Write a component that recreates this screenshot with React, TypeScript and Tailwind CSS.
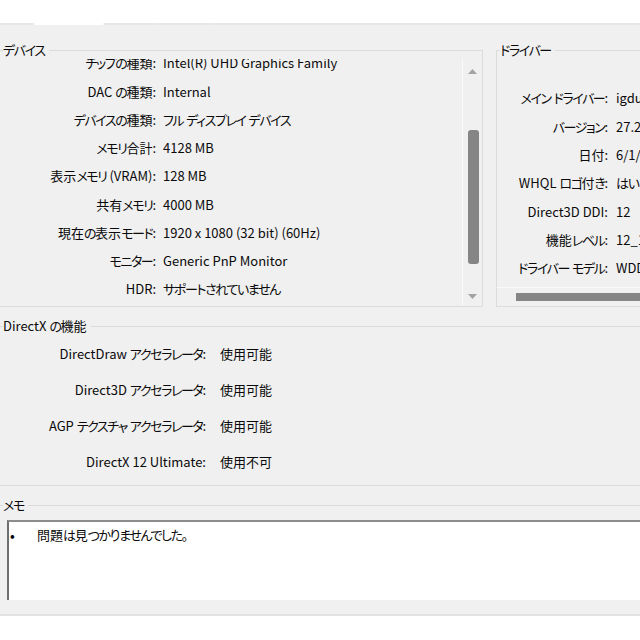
import React from "react";

const font = {
  fontFamily: '"Noto Sans CJK JP", "Noto Sans", sans-serif',
};

// Narrow kana runs so they approximate the proportional kana of the Windows UI font.
function T({ s }: { s: string }) {
  const parts = s.split(/([\u3000-\u30FF]+)/).filter((p) => p.length > 0);
  return (
    <>
      {parts.map((p, i) =>
        /^[\u3000-\u30FF]+$/.test(p) ? (
          <span key={i} className="tracking-[-1.4px]">
            {p}
          </span>
        ) : (
          <span key={i}>{p}</span>
        )
      )}
    </>
  );
}

function GroupLabel({ text }: { text: string }) {
  return (
    <div className="absolute left-[3px] top-[-10px] bg-[#f0f0f0] pr-[4px] text-[13px] leading-[18px] text-[#0a0a0a] whitespace-nowrap">
      <T s={text} />
    </div>
  );
}

const deviceRows: [string, string][] = [
  ["チップの種類:", "Intel(R) UHD Graphics Family"],
  ["DAC の種類:", "Internal"],
  ["デバイスの種類:", "フル ディスプレイ デバイス"],
  ["メモリ合計:", "4128 MB"],
  ["表示メモリ (VRAM):", "128 MB"],
  ["共有メモリ:", "4000 MB"],
  ["現在の表示モード:", "1920 x 1080 (32 bit) (60Hz)"],
  ["モニター:", "Generic PnP Monitor"],
  ["HDR:", "サポートされていません"],
];

const driverRows: [string, string][] = [
  ["メイン ドライバー:", "igdumdim64.dll,igd10iumd64.dll,igd10iumd64.dll"],
  ["バージョン:", "27.20.100.8681"],
  ["日付:", "6/1/2021 9:00:00"],
  ["WHQL ロゴ付き:", "はい"],
  ["Direct3D DDI:", "12"],
  ["機能レベル:", "12_1,12_0,11_1,11_0,10_1,10_0"],
  ["ドライバー モデル:", "WDDM 2.7"],
];

const dxRows: [string, string][] = [
  ["DirectDraw アクセラレータ:", "使用可能"],
  ["Direct3D アクセラレータ:", "使用可能"],
  ["AGP テクスチャ アクセラレータ:", "使用可能"],
  ["DirectX 12 Ultimate:", "使用不可"],
];

export default function App() {
  return (
    <div
      className="w-[640px] h-[640px] bg-white overflow-hidden flex flex-col text-[13px] text-[#0a0a0a] [font-feature-settings:'palt']"
      style={font}
    >
      <div className="h-[23px] bg-white shrink-0" />
      {/* tab strip */}
      <div className="h-[2px] shrink-0 flex">
        <div className="w-[34px] bg-[#e6e6e6]" />
        <div className="w-[69px] bg-white" />
        <div className="w-[54px] bg-[#e6e6e6] border-l border-[#f4f4f4]" />
        <div className="w-[53px] bg-[#e6e6e6] border-l border-[#f4f4f4]" />
        <div className="flex-1 bg-[#e6e6e6] border-l border-[#f4f4f4]" />
      </div>

      <div className="h-[591px] shrink-0 bg-[#f0f0f0] border-b-2 border-[#e2e2e2] flex flex-col">
        <div className="h-[25px] shrink-0" />
        {/* top groups */}
        <div className="flex h-[257px] shrink-0">
          <div className="relative w-[483px] shrink-0 border-t border-r border-b border-[#dcdcdc] flex flex-col">
            <GroupLabel text="デバイス" />
            <div className="h-[8px] shrink-0" />
            <div className="flex flex-1 min-h-0">
              <div className="flex-1 overflow-hidden">
                <div className="mt-[-10px]">
                  {deviceRows.map(([l, v]) => (
                    <div key={l} className="flex items-center h-[28.25px]">
                      <div className="w-[156px] shrink-0 text-right whitespace-nowrap">
                        <T s={l} />
                      </div>
                      <div className="pl-[7px] whitespace-nowrap">
                        <T s={v} />
                      </div>
                    </div>
                  ))}
                </div>
              </div>
              {/* vertical scrollbar */}
              <div className="w-[20px] shrink-0 border-l border-[#fafafa] flex flex-col items-center pt-[10px]">
                <svg width="9" height="5" viewBox="0 0 9 5" className="shrink-0">
                  <path d="M0 5 L4.5 0 L9 5 Z" fill="#a3a3a3" />
                </svg>
                <div className="h-[56px] shrink-0" />
                <div className="w-[11px] h-[134px] rounded-[3px] bg-[#858585] shrink-0 ml-[1px]" />
                <div className="h-[30px] shrink-0" />
                <svg width="9" height="5" viewBox="0 0 9 5" className="shrink-0">
                  <path d="M0 0 L4.5 5 L9 0 Z" fill="#a3a3a3" />
                </svg>
              </div>
            </div>
          </div>
          <div className="w-[13px] shrink-0" />
          <div className="relative w-[200px] shrink-0 border-t border-l border-b border-[#dcdcdc] flex flex-col">
            <GroupLabel text="ドライバー" />
            <div className="flex-1 overflow-hidden pt-[33px]">
              {driverRows.map(([l, v]) => (
                <div key={l} className="flex items-center h-[28.33px]">
                  <div className="w-[111px] shrink-0 text-right whitespace-nowrap">
                    <T s={l} />
                  </div>
                  <div className="pl-[8px] whitespace-nowrap">
                    <T s={v} />
                  </div>
                </div>
              ))}
            </div>
            <div className="h-[19px] shrink-0 border-t border-[#fafafa]">
              <div className="ml-[19px] mt-[5px] h-[8px] bg-[#858585]" />
            </div>
          </div>
        </div>

        <div className="h-[19px] shrink-0" />
        {/* DirectX features */}
        <div className="relative h-[160px] shrink-0 border-t border-b border-[#dcdcdc] pt-[9px]">
          <GroupLabel text="DirectX の機能" />
          {dxRows.map(([l, v]) => (
            <div key={l} className="flex items-center h-[36px]">
              <div className="w-[206px] shrink-0 text-right whitespace-nowrap">
                <T s={l} />
              </div>
              <div className="pl-[14px] whitespace-nowrap">
                <T s={v} />
              </div>
            </div>
          ))}
        </div>

        <div className="h-[19px] shrink-0" />
        {/* Memo */}
        <div className="relative flex-1 border-t border-[#dcdcdc] flex flex-col">
          <GroupLabel text="メモ" />
          <div className="h-[14px] shrink-0" />
          <div className="ml-[7px] h-[80px] shrink-0 bg-white border-t-2 border-l-2 border-t-[#8c8c8c] border-l-[#6e6e6e] pt-[4px]">
            <div className="flex items-center h-[18px]">
              <div className="w-[28px] pl-[1px] text-[14px] text-black">•</div>
              <div className="whitespace-nowrap">
                <T s="問題は見つかりませんでした。" />
              </div>
            </div>
          </div>
        </div>
      </div>
      <div className="flex-1 bg-white" />
    </div>
  );
}
